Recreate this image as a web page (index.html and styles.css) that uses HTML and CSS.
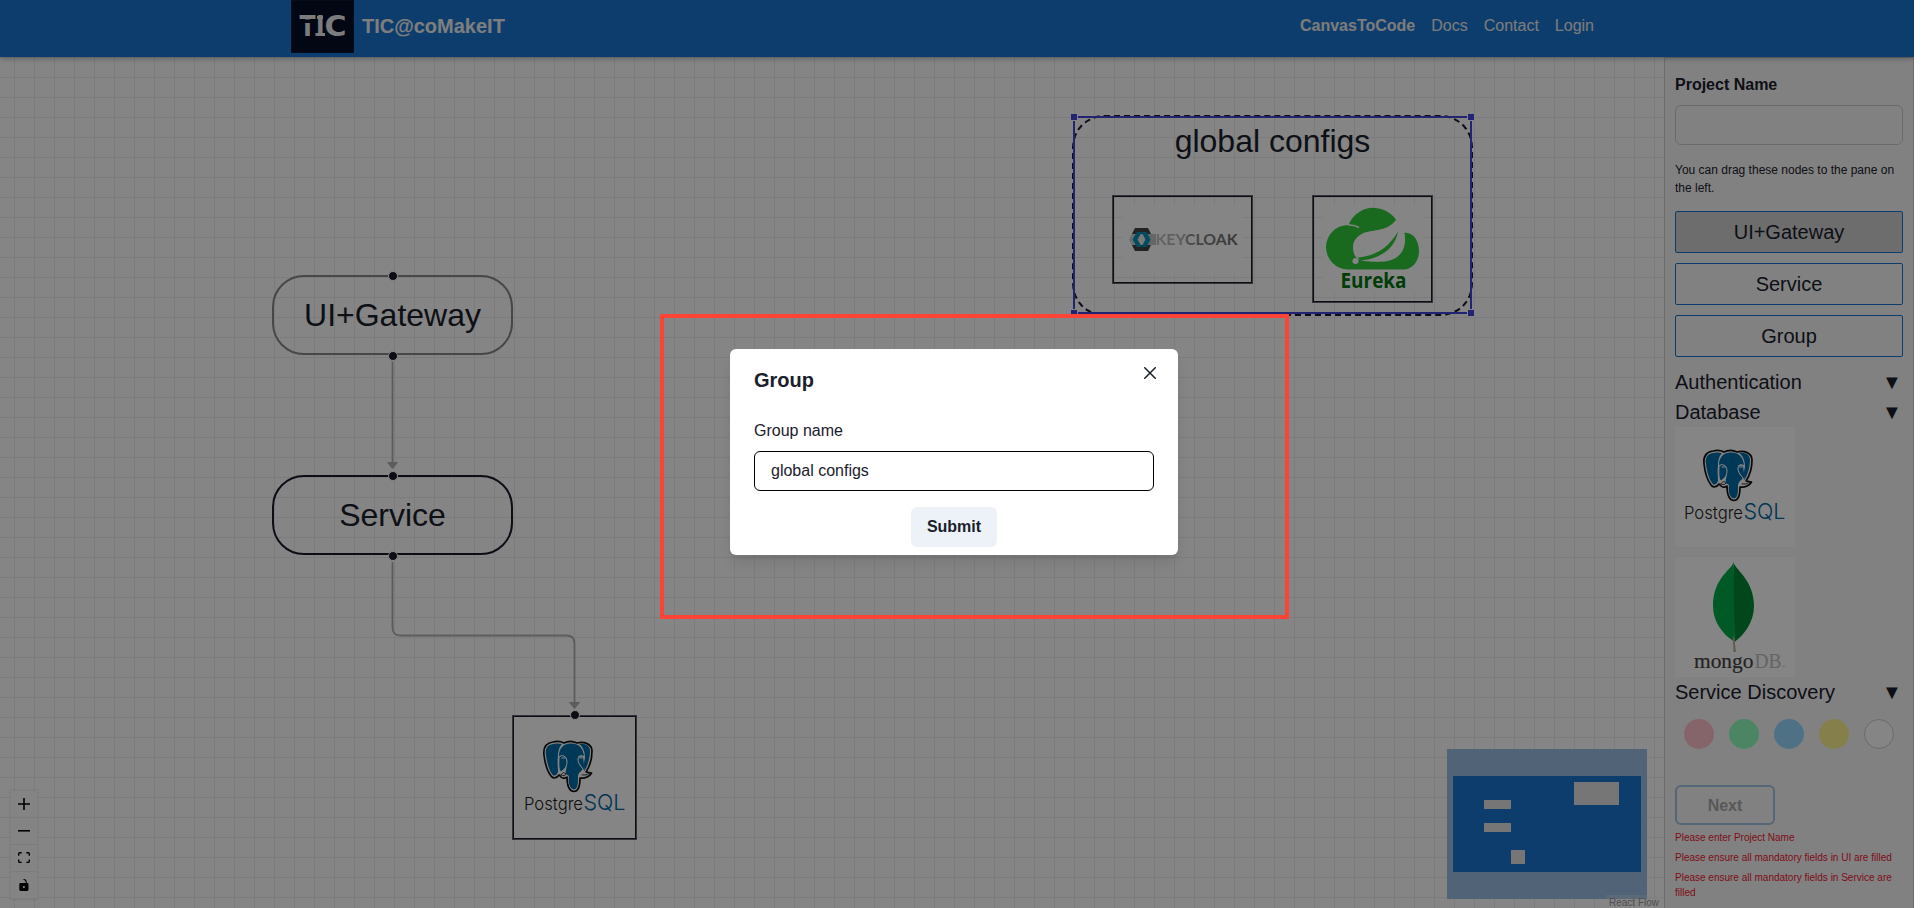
FILE: index.html
```html
<!DOCTYPE html>
<html lang="en">
<head>
<meta charset="utf-8">
<title>CanvasToCode</title>
<link rel="stylesheet" href="styles.css">
</head>
<body>
<div class="app">
  <header class="topbar">
    <a class="brand">
      <svg class="logo" viewBox="0 0 63 53" width="63" height="53">
        <rect width="63" height="53" fill="#0b1a33"/>
        <rect x="1" y="1" width="61" height="51" fill="#050f26"/>
        <g class="logo-text"><text x="8.500" y="36" textLength="16" lengthAdjust="spacingAndGlyphs">T</text><text x="25" y="36" textLength="8.500" lengthAdjust="spacingAndGlyphs">I</text><text x="33.500" y="36" textLength="22" lengthAdjust="spacingAndGlyphs">C</text></g>
        <path d="M8 19.500H24V23H8Z" fill="#050f26"/>
        <path d="M24.500 33H34V36H24.500ZM26 16H32V19H26Z" fill="#eee"/>
      </svg>
      <span class="brand-name">TIC@coMakeIT</span>
    </a>
    <nav class="nav"><a class="active">CanvasToCode</a><a>Docs</a><a>Contact</a><a>Login</a></nav>
  </header>

  <div class="workspace">
    <main class="canvas">
      <svg class="edges" width="1664" height="851">
        <g fill="none" stroke="#b1b1b7" stroke-width="1.800">
          <path d="M392.500 304.500V409"/>
          <path d="M392.500 505V570.500Q392.500 578.500 400.500 578.500H566.500Q574.500 578.500 574.500 586.500V648"/>
        </g>
        <path d="M387.500 405.500H397.500L392.500 411.500ZM569.500 645.500H579.500L574.500 651.500Z" fill="#b1b1b7" stroke="#b1b1b7" stroke-linejoin="round"/>
      </svg>
      <div class="node gateway">UI+Gateway<i class="handle top"></i><i class="handle bottom"></i></div>
      <div class="node service">Service<i class="handle top"></i><i class="handle bottom"></i></div>
      <div class="node boxed pgnode">
        <svg width="120" height="120" viewBox="0 0 120 120">
          <rect width="120" height="120" fill="#fff"/>
          <g id="elephant" stroke-linejoin="round" stroke-linecap="round">
            <path d="M38 24C31 25 28 29 29 37C30 46 33 54 36 58C38 61 42 60 44 57L46 59C48 61 51 60 52 59C52 66 53 73 59 73.500C64 73.500 65 68 65 60C70 61 75 58 76.500 55L71 54C75 48 77 40 77 33C77 26 69 23 62 25C58 23 53 23 49 25C45 23 42 23 38 24Z" fill="#fff" stroke="#111" stroke-width="1.700"/>
            <path d="M38 26C32 27 30 31 31 37C32 45 34 52 37 56C39 59 42 57 43 54C43 48 42 44 43 38C43 32 45 28 47 26Q42 25 38 26Z" fill="#006ba8"/>
            <path d="M64 26C69 29 70 36 70 40C69 44 68 48 70 52C73 47 75 39 75 33C75 27 69 25 64 26Z" fill="#006ba8"/>
            <path d="M55 25.500C47 26 44 32 44 38C49 36 53 39 52 45C52 50 50 53 51 56L54 58C53 65 55 71 59 71.500C63 71 63 65 63 58C64 53 68 53 68 50C64 48 62 43 63 39C64 37 67 37 69 38C68 30 64 25 55 25.500Z" fill="#006ba8"/>
            <path d="M44 39C47 36 52 38 52 44C52 50 48 52 46 54C43 52 44 45 44 39ZM68 39C62 37 62 43 65 47L70 54" fill="#006ba8" stroke="#fff" stroke-width="1"/>
            <path d="M46 57C48 54 49 54 51 56C50 58 48 58 46 57ZM67 57Q71 58 75 55" fill="none" stroke="#333" stroke-width="1"/>
            <path d="M47 40H50M65 40H67" stroke="#fff" stroke-width="1.200"/>
          </g>
          <text x="9" y="92" class="pg-word" textLength="59" lengthAdjust="spacingAndGlyphs">Postgre</text>
          <text x="68.500" y="92" class="pg-sql" textLength="42" lengthAdjust="spacingAndGlyphs">SQL</text>
        </svg>
        <i class="handle top"></i>
      </div>
      <div class="group">global configs</div>
      <div class="resizer"><i class="rs tl"></i><i class="rs tr"></i><i class="rs bl"></i><i class="rs br"></i></div>
      <div class="node boxed kcnode">
        <svg width="120" height="69" viewBox="0 0 120 69">
          <linearGradient id="kc"><stop offset="0" stop-color="#c4c4c4"/><stop offset=".34" stop-color="#b0b0b0"/><stop offset=".42" stop-color="#8a8a8a"/><stop offset="1" stop-color="#6c6c6c"/></linearGradient>
          <rect width="120" height="69" fill="#fff"/>
          <path d="M6 34.500L12 23H25L31 34.500L25 46H12Z" fill="#d0d0d0"/>
          <path d="M24 29H33V40H24Z" fill="#c4c4c4"/>
          <path d="M9 29L12 23H25L28 29ZM9 40H28L25 46H12Z" fill="#444"/>
          <path d="M14 27H19L14.500 34.500L19 42H14L9.500 34.500ZM18.500 27H23.500L27.500 34.500L23.500 42H18.500L22.500 34.500Z" fill="#0094b8"/>
          <path d="M17.500 29.500H19.500L22 34.500L19.500 39.500H17.500L15 34.500Z" fill="#e8e8e8"/>
          <text x="32.500" y="40" class="kc-word" textLength="82" lengthAdjust="spacingAndGlyphs">KEYCLOAK</text>
        </svg>
      </div>
      <div class="node boxed eunode">
        <svg width="100" height="89" viewBox="0 0 100 89">
          <rect width="100" height="89" fill="#fff"/>
          <path d="M25 64.500A22 22 0 1 1 25.500 20A27 27 0 0 1 77 24L80 27.500C91 27 96 36 96 46C96 57 89 64.500 80 64.500Z" fill="#30cb3b"/>
          <path d="M25 20Q31 19.500 36 22.500" fill="none" stroke="#fff" stroke-width="1.500"/>
          <path d="M77.500 8C70 23 60 24 49 26C37 27 30 34 30 42C30 48 32 52 35 54C40 57 51 57 62 56.500C76 55 83 45 82 32Q81 19 77.500 8Z" fill="#fff"/>
          <path d="M35 52.500C51 51 65 44 75 26.500C72 44 57 54 37 55.500Z" fill="#30cb3b"/>
          <circle cx="32.500" cy="56" r="3" fill="#fff"/>
          <text x="17.500" y="82.500" class="eu-word" textLength="66" lengthAdjust="spacingAndGlyphs">Eureka</text>
        </svg>
      </div>

      <div class="controls">
        <button><svg viewBox="0 0 32 32"><path d="M32 18.133H18.133V32h-4.266V18.133H0v-4.266h13.867V0h4.266v13.867H32z"/></svg></button>
        <button><svg viewBox="0 0 32 5"><path d="M0 0h32v4.200H0z"/></svg></button>
        <button><svg viewBox="0 0 32 30"><path d="M3.692 4.630c0-.53.400-.938.939-.938h5.215V0H4.708C2.130 0 0 2.054 0 4.630v5.216h3.692V4.631zM27.354 0h-5.200v3.692h5.170c.53 0 .984.400.984.939v5.215H32V4.631A4.624 4.624 0 0027.354 0zm.954 24.830c0 .532-.400.940-.939.940h-5.215v3.768h5.215c2.577 0 4.631-2.130 4.631-4.707v-5.139h-3.692v5.139zm-23.677.940c-.531 0-.939-.400-.939-.940v-5.138H0v5.139c0 2.577 2.130 4.707 4.708 4.707h5.138V25.770H4.631z"/></svg></button>
        <button><svg viewBox="0 0 25 32"><path d="M21.333 10.667H19.810V7.619C19.810 3.429 16.380 0 12.190 0c-4.114 1.828-1.370 2.133.305 2.438 1.676.305 4.420 2.590 4.420 5.181v3.048H3.047A3.056 3.056 0 000 13.714v15.238A3.056 3.056 0 003.048 32h18.285a3.056 3.056 0 003.048-3.048V13.714a3.056 3.056 0 00-3.048-3.047zM12.190 24.533a3.056 3.056 0 01-3.047-3.047 3.056 3.056 0 013.047-3.048 3.056 3.056 0 013.048 3.048 3.056 3.056 0 01-3.048 3.047z"/></svg></button>
      </div>
      <svg class="minimap" width="200" height="150">
        <rect width="200" height="150" fill="#9abfe4"/>
        <rect x="6" y="27" width="188" height="96" fill="#1976d2"/>
        <path d="M37 51H64V60H37ZM37 74H64V83H37ZM64 101H78V115H64ZM127 33H172V56H127Z" fill="#e2e2e2"/>
      </svg>
      <div class="attribution">React Flow</div>
    </main>

    <aside class="sidebar">
      <label class="title">Project Name</label>
      <input class="field" type="text">
      <p class="hint">You can drag these nodes to the pane on the left.</p>
      <div class="palette"><div class="item used">UI+Gateway</div><div class="item">Service</div><div class="item">Group</div></div>
      <div class="section"><span>Authentication</span><span>▼</span></div>
      <div class="section"><span>Database</span><span>▼</span></div>
      <div class="images">
        <svg width="120" height="120" viewBox="0 0 120 120">
          <rect width="120" height="120" fill="#fff"/>
          <use href="#elephant"/>
          <text x="9" y="92" class="pg-word" textLength="59" lengthAdjust="spacingAndGlyphs">Postgre</text>
          <text x="68.500" y="92" class="pg-sql" textLength="42" lengthAdjust="spacingAndGlyphs">SQL</text>
        </svg>
        <svg width="120" height="120" viewBox="0 0 120 120">
          <rect width="120" height="120" fill="#fff"/>
          <path d="M58.500 5C58 12 38 20 38 49C38 65 48 77 57 83L59.500 85L60 50Z" fill="#00ad48"/>
          <path d="M58.500 5C59 12 79 22 79 49C79 65 69 78 59.500 85Z" fill="#008a36"/>
          <path d="M59 78L61 95H58.500L57.800 82Z" fill="#b5b296"/>
          <text x="19" y="111" class="mg-dark" textLength="59.500" lengthAdjust="spacingAndGlyphs">mongo</text>
          <text x="79.500" y="111" class="mg-light" textLength="27" lengthAdjust="spacingAndGlyphs">DB</text>
          <text x="107" y="111" class="mg-reg">®</text>
        </svg>
      </div>
      <div class="section"><span>Service Discovery</span><span>▼</span></div>
      <div class="swatches"><i class="pink"></i><i class="green"></i><i class="blue"></i><i class="yellow"></i><i class="white"></i></div>
      <button class="next">Next</button>
      <div class="errors"><p>Please enter Project Name</p><p>Please ensure all mandatory fields in UI are filled</p><p>Please ensure all mandatory fields in Service are filled</p></div>
    </aside>
  </div>

  <div class="overlay"></div>
  <div class="highlight"></div>
  <section class="modal">
    <h2>Group</h2>
    <svg class="close" viewBox="0 0 24 24" width="12" height="12"><path d="M1.500 1.500L22.500 22.500M22.500 1.500L1.500 22.500" stroke="#1a202c" stroke-width="3" stroke-linecap="round"/></svg>
    <label>Group name</label>
    <input type="text" value="global configs">
    <button>Submit</button>
  </section>
</div>
</body>
</html>
```
FILE: styles.css
```css
* { box-sizing: border-box; margin: 0; padding: 0; }
html { background: #fff; overflow: hidden; }
body { font: 16px/24px "Liberation Sans", Arial, sans-serif; color: #1a202c; overflow: hidden; }
button, input { font: inherit; color: inherit; outline: none; }
svg { display: block; }

.app { position: relative; display: flex; flex-direction: column; width: 1914px; height: 908px; overflow: hidden; }

.topbar { flex: none; height: 57px; padding: 0 320px 0 291px; display: flex; justify-content: space-between; background: #1976d2; color: #fff; box-shadow: 0 2px 5px rgba(0, 0, 0, .25); z-index: 1; }
.brand { display: flex; gap: 8px; height: 53px; }
.brand-name { font-size: 20px; font-weight: 700; line-height: 52px; color: #f2f2f2; }
.logo-text { font: 700 27.5px "DejaVu Sans", sans-serif; fill: #eee; }
.nav { display: flex; gap: 16px; line-height: 52px; color: #eee; }
.nav .active { font-weight: 700; }

.workspace { flex: 1; display: flex; min-height: 0; }
.canvas { position: relative; flex: 1; overflow: hidden; background: linear-gradient(90deg, #eee 1px, transparent 1px) 14px 0 / 20px 20px, linear-gradient(#eee 1px, transparent 1px) 0 0 / 20px 20px, #fff; }
.edges { position: absolute; left: 0; top: 0; }

.node { position: absolute; display: flex; align-items: center; justify-content: center; font-size: 32px; }
.gateway, .service { left: 272px; width: 241px; height: 80px; border: 2px solid #1a192b; border-radius: 32px; padding-bottom: 1px; }
.gateway { top: 218px; border-color: #888; }
.service { top: 418px; }
.boxed { border: 1px solid #62626c; box-shadow: inset 0 0 0 1px #1a192b; }
.pgnode { left: 512px; top: 658px; width: 125px; height: 125px; background: #fff; }
.kcnode { left: 1112px; top: 138px; width: 141px; height: 89px; }
.eunode { left: 1312px; top: 138px; width: 121px; height: 108px; }
.handle { position: absolute; left: 50%; width: 10px; height: 10px; margin-left: -5px; border: 1px solid #fff; border-radius: 50%; background: #1a192b; }
.handle.top { top: -6.5px; }
.handle.bottom { bottom: -7.5px; }

.group { position: absolute; left: 1072px; top: 58px; width: 401px; height: 201px; border: 2px dashed #1a192b; border-radius: 32px; text-align: center; font-size: 32px; line-height: 48px; }
.resizer { position: absolute; left: 1073px; top: 59px; width: 399px; height: 198px; border: 2px solid #4046dd; }
.rs { position: absolute; width: 8px; height: 8px; border: 1.5px solid #fff; background: #4046dd; }
.rs.tl { left: -5px; top: -5px; }
.rs.tr { right: -5px; top: -5px; }
.rs.bl { left: -5px; bottom: -5px; }
.rs.br { right: -5px; bottom: -5px; }

.pg-word { font: 300 17.5px Inter, sans-serif; fill: #222; }
.pg-sql { font: 300 22px Inter, sans-serif; fill: #00679f; }
.mg-dark { font: 22px "Liberation Serif", serif; fill: #444; stroke: #444; stroke-width: .2px; }
.mg-light { font: 21px "Liberation Serif", serif; fill: #c0c0c0; }
.mg-reg { font: 5px "Liberation Serif", serif; fill: #bbb; }
.kc-word { font: 700 16px Lato, sans-serif; fill: url(#kc); }
.eu-word { font: 700 20.5px "Open Sans", sans-serif; fill: #00750f; }

.controls { position: absolute; left: 11px; top: 734px; width: 26px; box-shadow: 0 0 2px 1px rgba(0, 0, 0, .08); }
.controls button { display: flex; align-items: center; justify-content: center; width: 26px; height: 27px; background: #fefefe; border: 0; border-bottom: 1px solid #eee; }
.controls svg { width: 12px; max-height: 12px; }
.minimap { position: absolute; left: 1447px; top: 692px; }
.attribution { position: absolute; right: 0; top: 838px; padding: 2px 5px 0 3px; background: rgba(255, 255, 255, .2); color: #999; font-size: 10px; line-height: 11px; }

.sidebar { width: 250px; padding: 15px 10px 0; border: 1px solid #d0d0d0; border-bottom: 0; background: #f8f8f8; }
.title { display: block; font-weight: 700; line-height: 24px; }
.field { display: block; width: 100%; height: 40px; margin-top: 8px; border: 1px solid #ccc; border-radius: 6px; background: transparent; }
.hint { margin: 16px 0 14px; font-size: 12px; line-height: 18px; }
.palette { display: flex; flex-direction: column; gap: 10px; margin-bottom: 10px; }
.item { height: 42px; border: 1px solid #1976d2; border-radius: 2px; text-align: center; font-size: 20px; line-height: 40px; }
.item.used { background: #d2d2d2; }
.section { display: flex; justify-content: space-between; height: 30px; font-size: 20px; line-height: 30px; }
.section span:last-child { width: 21px; }
.images { display: flex; flex-direction: column; gap: 10px; }
.swatches { display: flex; justify-content: space-around; margin: 12px 2px 36px; }
.swatches i { width: 30px; height: 30px; border-radius: 50%; }
.pink { background: #ffc0cb; }
.green { background: #90ffbe; }
.blue { background: #96d8ff; }
.yellow { background: #fff493; }
.white { border: 1px solid #ccc; background: #fff; }
.next { display: block; width: 100px; height: 40px; padding-top: 1px; border: 2px solid #a0c6e8; border-radius: 6px; background: transparent; color: #aaa; font-weight: 700; }
.errors { display: flex; flex-direction: column; gap: 5px; margin-top: 5px; color: #f01830; font-size: 10px; line-height: 15px; }

.overlay { position: absolute; inset: 0; background: rgba(0, 0, 0, .48); z-index: 2; }
.highlight { position: absolute; left: 660px; top: 314px; width: 629px; height: 305px; border: 4px solid #fb4436; z-index: 3; }
.modal { position: absolute; left: 730px; top: 349px; width: 448px; height: 206px; padding: 16px 24px 8px; display: flex; flex-direction: column; align-items: center; border-radius: 6px; background: #fff; box-shadow: 0 10px 15px -3px rgba(0, 0, 0, .1), 0 4px 6px -2px rgba(0, 0, 0, .05); z-index: 4; }
.modal h2 { align-self: flex-start; font-size: 20px; line-height: 30px; }
.close { position: absolute; right: 22px; top: 18px; }
.modal label { align-self: flex-start; margin: 24px 0 8px; }
.modal input { width: 400px; height: 40px; flex: none; padding: 0 16px; border: 1px solid #000; border-radius: 6px; }
.modal button { flex: none; width: 86px; height: 40px; margin-top: 16px; border: 0; border-radius: 6px; background: #edf2f9; font-weight: 700; }
```
